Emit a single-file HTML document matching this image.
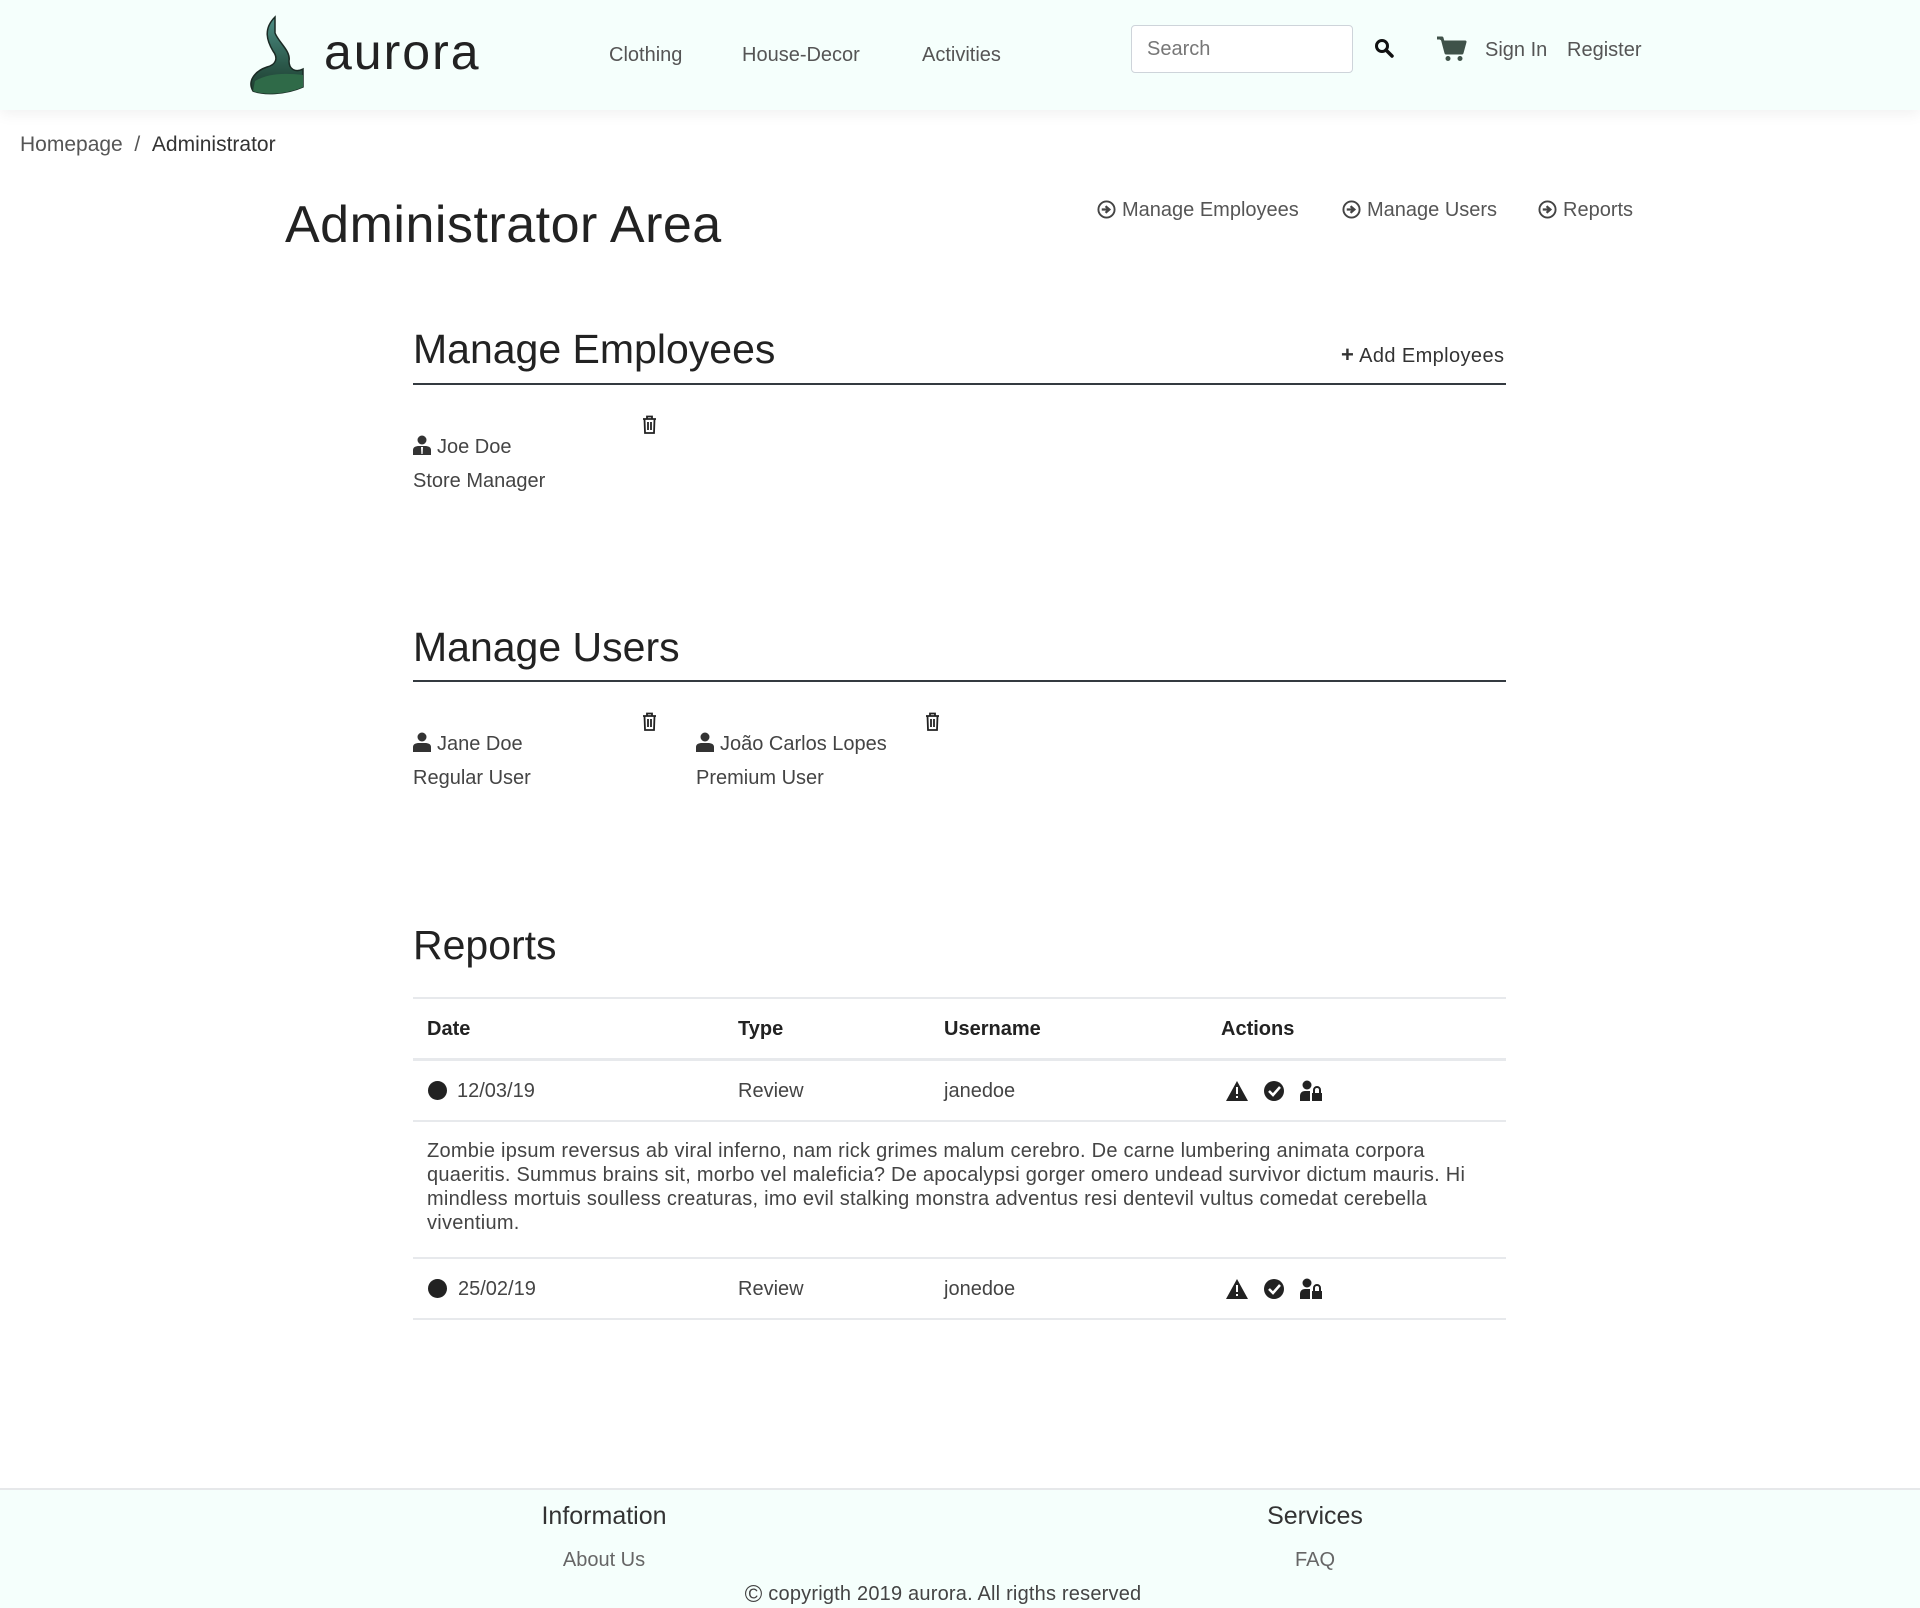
<!DOCTYPE html>
<html><head><meta charset="utf-8"><style>
*{margin:0;padding:0;box-sizing:border-box}
body{width:1920px;height:1608px;position:relative;background:#fff;font-family:"Liberation Sans",sans-serif;color:#343a40;overflow:hidden}
.t{position:absolute;white-space:nowrap;line-height:1}
.hdr{position:absolute;left:0;top:0;width:1920px;height:110px;background:#f5fffc;box-shadow:0 4px 14px rgba(0,0,0,.06)}
.line{position:absolute;left:413px;width:1093px;height:2px;background:#343a40}
.hl{position:absolute;left:413px;width:1093px;height:2px;background:#e7e9ec}
svg{position:absolute}
</style></head><body>
<div class="hdr"></div>
<svg style="left:245px;top:15px" width="62" height="80" viewBox="0 0 62 80">
<defs><linearGradient id="g" x1="0" y1="0" x2="0" y2="1"><stop offset="0" stop-color="#4e8f86"/><stop offset=".6" stop-color="#2c5a4c"/><stop offset="1" stop-color="#1c3a2c"/></linearGradient></defs>
<path d="M30 2 C18 14 22 26 28 36 C34 44 30 50 22 52 C10 56 2 66 8 76 C18 80 40 80 58 72 L58 54 C50 58 44 54 44 46 C46 36 34 28 30 18 Z" fill="url(#g)" stroke="#1a2a24" stroke-width="1.5"/>
<path d="M10 66 C24 58 40 58 58 60 L58 72 C40 80 18 80 8 76 Z" fill="#2f6a48"/>
</svg>
<div class="t" style="left:324px;top:27px;font-size:50px;color:#222;letter-spacing:2px">aurora</div>
<div class="t" style="left:609px;top:45px;font-size:20px;color:#555">Clothing</div>
<div class="t" style="left:742px;top:45px;font-size:20px;color:#555">House-Decor</div>
<div class="t" style="left:922px;top:45px;font-size:20px;color:#555">Activities</div>
<div style="position:absolute;left:1131px;top:25px;width:222px;height:48px;border:1px solid #ced4da;border-radius:4px;background:#fff"></div>
<div class="t" style="left:1147px;top:39px;font-size:20px;color:#777">Search</div>
<svg style="left:1374px;top:38px" width="20" height="20" viewBox="0 0 20 20"><circle cx="8" cy="8" r="5.5" fill="none" stroke="#111" stroke-width="3"/><path d="M12 12 L18 18" stroke="#111" stroke-width="3.5" stroke-linecap="round"/></svg>
<svg style="left:1437px;top:36px" width="30" height="26" viewBox="0 0 30 26"><path d="M0 2 H5 L9 17 H25 L28 6 H7" fill="#3f5249" stroke="#3f5249" stroke-width="3" stroke-linejoin="round"/><circle cx="11" cy="22.5" r="2.5" fill="#3f5249"/><circle cx="23" cy="22.5" r="2.5" fill="#3f5249"/></svg>
<div class="t" style="left:1485px;top:40px;font-size:20px;color:#555">Sign In</div>
<div class="t" style="left:1567px;top:40px;font-size:20px;color:#555">Register</div>

<div class="t" style="left:20px;top:134px;font-size:21px;color:#555">Homepage &nbsp;/ &nbsp;<span style="color:#333">Administrator</span></div>
<div class="t" style="left:285px;top:199px;font-size:52px;color:#222;letter-spacing:.5px">Administrator Area</div>

<svg style="left:1097px;top:200px" width="19" height="19" viewBox="0 0 20 20"><circle cx="10" cy="10" r="8.5" fill="none" stroke="#444" stroke-width="2"/><path d="M5 10 H12 M9 6.5 L13 10 L9 13.5" fill="none" stroke="#444" stroke-width="2.4"/></svg>
<div class="t" style="left:1122px;top:200px;font-size:20px;color:#555">Manage Employees</div>
<svg style="left:1342px;top:200px" width="19" height="19" viewBox="0 0 20 20"><circle cx="10" cy="10" r="8.5" fill="none" stroke="#444" stroke-width="2"/><path d="M5 10 H12 M9 6.5 L13 10 L9 13.5" fill="none" stroke="#444" stroke-width="2.4"/></svg>
<div class="t" style="left:1367px;top:200px;font-size:20px;color:#555">Manage Users</div>
<svg style="left:1538px;top:200px" width="19" height="19" viewBox="0 0 20 20"><circle cx="10" cy="10" r="8.5" fill="none" stroke="#444" stroke-width="2"/><path d="M5 10 H12 M9 6.5 L13 10 L9 13.5" fill="none" stroke="#444" stroke-width="2.4"/></svg>
<div class="t" style="left:1563px;top:200px;font-size:20px;color:#555">Reports</div>

<div class="t" style="left:413px;top:329px;font-size:41px;color:#222">Manage Employees</div>
<div class="t" style="left:1341px;top:344px;font-size:20px;color:#333;letter-spacing:.4px"><b style="font-size:22px">+</b> Add Employees</div>
<div class="line" style="top:383px"></div>
<svg style="left:413px;top:435px" width="18" height="20" viewBox="0 0 18 20"><circle cx="9" cy="5" r="4.5" fill="#333"/><path d="M0 20 V15 C0 12 3 11 6 11 H12 C15 11 18 12 18 15 V20 Z" fill="#333"/><path d="M8 12 H10 L9.6 19 H8.4Z" fill="#fff"/></svg>
<div class="t" style="left:437px;top:437px;font-size:20px;color:#444">Joe Doe</div>
<div class="t" style="left:413px;top:471px;font-size:20px;color:#444">Store Manager</div>
<svg style="left:642px;top:415px" width="15" height="19" viewBox="0 0 15 19"><path d="M1 4 H14 M5 4 V1.5 H10 V4 M2.5 4 L3 18 H12 L12.5 4 M6 7 V15 M9 7 V15" fill="none" stroke="#222" stroke-width="1.8"/></svg>

<div class="t" style="left:413px;top:627px;font-size:41px;color:#222">Manage Users</div>
<div class="line" style="top:680px"></div>
<svg style="left:413px;top:732px" width="18" height="20" viewBox="0 0 18 20"><circle cx="9" cy="5" r="4.5" fill="#333"/><path d="M0 20 V15 C0 12 3 11 6 11 H12 C15 11 18 12 18 15 V20 Z" fill="#333"/></svg>
<div class="t" style="left:437px;top:734px;font-size:20px;color:#444">Jane Doe</div>
<div class="t" style="left:413px;top:768px;font-size:20px;color:#444">Regular User</div>
<svg style="left:642px;top:712px" width="15" height="19" viewBox="0 0 15 19"><path d="M1 4 H14 M5 4 V1.5 H10 V4 M2.5 4 L3 18 H12 L12.5 4 M6 7 V15 M9 7 V15" fill="none" stroke="#222" stroke-width="1.8"/></svg>
<svg style="left:696px;top:732px" width="18" height="20" viewBox="0 0 18 20"><circle cx="9" cy="5" r="4.5" fill="#333"/><path d="M0 20 V15 C0 12 3 11 6 11 H12 C15 11 18 12 18 15 V20 Z" fill="#333"/></svg>
<div class="t" style="left:720px;top:734px;font-size:20px;color:#444">João Carlos Lopes</div>
<div class="t" style="left:696px;top:768px;font-size:20px;color:#444">Premium User</div>
<svg style="left:925px;top:712px" width="15" height="19" viewBox="0 0 15 19"><path d="M1 4 H14 M5 4 V1.5 H10 V4 M2.5 4 L3 18 H12 L12.5 4 M6 7 V15 M9 7 V15" fill="none" stroke="#222" stroke-width="1.8"/></svg>

<div class="t" style="left:413px;top:925px;font-size:41px;color:#222">Reports</div>
<div class="hl" style="top:997px"></div>
<div class="t" style="left:427px;top:1019px;font-size:20px;font-weight:bold;color:#222">Date</div>
<div class="t" style="left:738px;top:1019px;font-size:20px;font-weight:bold;color:#222">Type</div>
<div class="t" style="left:944px;top:1019px;font-size:20px;font-weight:bold;color:#222">Username</div>
<div class="t" style="left:1221px;top:1019px;font-size:20px;font-weight:bold;color:#222">Actions</div>
<div class="hl" style="top:1058px;height:3px"></div>

<div style="position:absolute;left:428px;top:1081px;width:19px;height:19px;border-radius:50%;background:#222"></div>
<div class="t" style="left:457px;top:1081px;font-size:20px;color:#444">12/03/19</div>
<div class="t" style="left:738px;top:1081px;font-size:20px;color:#444">Review</div>
<div class="t" style="left:944px;top:1081px;font-size:20px;color:#444">janedoe</div>
<div class="hl" style="top:1120px"></div>
<div class="t" style="left:427px;top:1139px;font-size:20px;line-height:24px;color:#444;letter-spacing:.25px">Zombie ipsum reversus ab viral inferno, nam rick grimes malum cerebro. De carne lumbering animata corpora<br>quaeritis. Summus brains sit, morbo vel maleficia? De apocalypsi gorger omero undead survivor dictum mauris. Hi<br>mindless mortuis soulless creaturas, imo evil stalking monstra adventus resi dentevil vultus comedat cerebella<br>viventium.</div>
<div class="hl" style="top:1257px"></div>
<div style="position:absolute;left:428px;top:1279px;width:19px;height:19px;border-radius:50%;background:#222"></div>
<div class="t" style="left:458px;top:1279px;font-size:20px;color:#444">25/02/19</div>
<div class="t" style="left:738px;top:1279px;font-size:20px;color:#444">Review</div>
<div class="t" style="left:944px;top:1279px;font-size:20px;color:#444">jonedoe</div>
<div class="hl" style="top:1318px"></div>

<svg style="left:1226px;top:1080px" width="106" height="22" viewBox="0 0 106 22">
<path d="M11 1 L22 21 H0 Z" fill="#222"/><path d="M10 7 H12 V14 H10Z M10 16 H12 V18 H10Z" fill="#fff"/>
<circle cx="48" cy="11" r="10" fill="#222"/><path d="M43 11 L47 15 L54 7" fill="none" stroke="#fff" stroke-width="2.5"/>
<circle cx="81" cy="5" r="4.5" fill="#222"/><path d="M74 21 V16 C74 13 76 11 79 11 H84 V21Z" fill="#222"/><rect x="86" y="13" width="10" height="8" fill="#222"/><path d="M88 13 V10 A3 3 0 0 1 94 10 V13" fill="none" stroke="#222" stroke-width="2"/>
</svg>
<svg style="left:1226px;top:1278px" width="106" height="22" viewBox="0 0 106 22">
<path d="M11 1 L22 21 H0 Z" fill="#222"/><path d="M10 7 H12 V14 H10Z M10 16 H12 V18 H10Z" fill="#fff"/>
<circle cx="48" cy="11" r="10" fill="#222"/><path d="M43 11 L47 15 L54 7" fill="none" stroke="#fff" stroke-width="2.5"/>
<circle cx="81" cy="5" r="4.5" fill="#222"/><path d="M74 21 V16 C74 13 76 11 79 11 H84 V21Z" fill="#222"/><rect x="86" y="13" width="10" height="8" fill="#222"/><path d="M88 13 V10 A3 3 0 0 1 94 10 V13" fill="none" stroke="#222" stroke-width="2"/>
</svg>

<div style="position:absolute;left:0;top:1488px;width:1920px;height:120px;background:#f5fffc;border-top:2px solid #e6e8ea"></div>
<div class="t" style="left:504px;width:200px;text-align:center;top:1504px;font-size:25px;color:#333">Information</div>
<div class="t" style="left:504px;width:200px;text-align:center;top:1550px;font-size:20px;color:#666">About Us</div>
<div class="t" style="left:1215px;width:200px;text-align:center;top:1504px;font-size:25px;color:#333">Services</div>
<div class="t" style="left:1215px;width:200px;text-align:center;top:1550px;font-size:20px;color:#666">FAQ</div>
<div class="t" style="left:643px;width:600px;text-align:center;top:1583px;font-size:20px;color:#444;letter-spacing:.2px"><span style="font-size:24px;vertical-align:-2px">©</span> copyrigth 2019 aurora. All rigths reserved</div>
</body></html>
